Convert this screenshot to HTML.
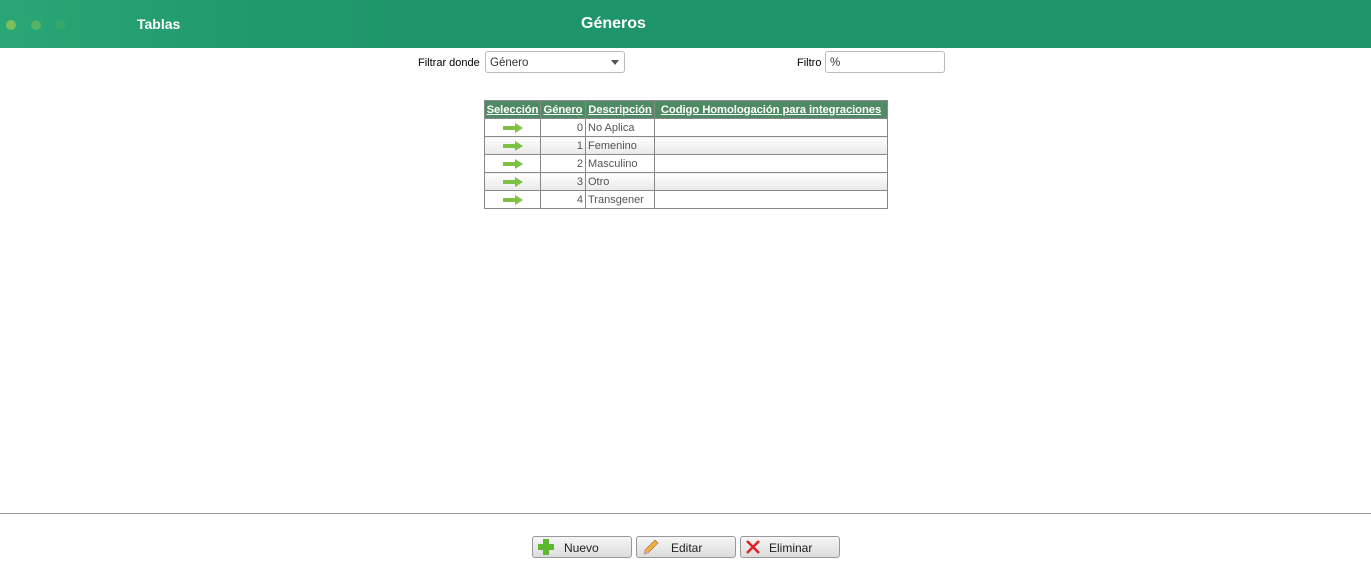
<!DOCTYPE html>
<html><head><meta charset="utf-8"><style>
*{box-sizing:border-box}
body{margin:0;width:1371px;height:584px;background:#fff;font-family:"Liberation Sans",sans-serif;font-size:12px;position:relative;overflow:hidden}
.hdr{position:absolute;left:0;top:0;width:1371px;height:48px;background:linear-gradient(90deg,#2aa776 0,#229c6c 200px,#1e9669 400px,#1e9669 100%)}
.dot{position:absolute;top:20px;width:10px;height:10px;border-radius:50%}
.t{position:absolute;color:#fff;font-weight:bold}
.lbl{position:absolute;font-size:11px;color:#000}
.box{position:absolute;border:1px solid #bbb;border-radius:3px;background:#fff;font-size:11.5px;padding:5px 4px 0;height:22px}
table{position:absolute;left:484px;top:100px;border-collapse:collapse;table-layout:fixed;width:403px;font-family:"Liberation Sans",sans-serif;font-size:11px}
td,th{border:1px solid #888;height:18px;padding:0 2px;color:#555;white-space:nowrap;overflow:hidden}
th{background:#4e8a63;color:#fff;text-decoration:underline;font-weight:bold;padding:0 1px;font-size:11.3px;letter-spacing:-0.1px}
tr.g td{background:linear-gradient(#fff,#e8e8e8)}
.arr{display:block;margin:0 auto;width:20px;height:10px}
.btn{position:absolute;top:536px;width:100px;height:22px;border:1px solid #999;border-radius:3px;background:linear-gradient(#f6f6f6,#dcdcdc);font-size:12px;color:#222}
.btn span{position:absolute;top:4px}
</style></head><body>
<div class="hdr">
<div class="dot" style="left:6px;background:#7cbf5a"></div>
<div class="dot" style="left:31px;background:#5fb661;opacity:.8"></div>
<div class="dot" style="left:56px;background:#43a865;opacity:.6"></div>
<div class="t" style="left:137px;top:16px;font-size:14px">Tablas</div>
<div class="t" style="left:581px;top:15px;font-size:16px">Géneros</div>
</div>
<div class="lbl" style="left:418px;top:57px">Filtrar donde</div>
<div class="box" style="left:485px;top:51px;width:140px;color:#333">Género<svg style="position:absolute;right:5px;top:8px" width="8" height="5"><path d="M0 0h8L4 5z" fill="#555"/></svg></div>
<div class="lbl" style="left:797px;top:57px">Filtro</div>
<div class="box" style="left:825px;top:51px;width:120px;color:#333">%</div>
<table>
<colgroup><col style="width:56px"><col style="width:45px"><col style="width:69px"><col style="width:233px"></colgroup>
<tr><th>Selección</th><th>Género</th><th>Descripción</th><th>Codigo Homologación para integraciones</th></tr>
<tr><td><svg class="arr" viewBox="0 0 20 10"><path d="M0 3h12V0l8 5-8 5V7H0z" fill="#7bc143"/></svg></td><td style="text-align:right">0</td><td>No Aplica</td><td></td></tr>
<tr class="g"><td><svg class="arr" viewBox="0 0 20 10"><path d="M0 3h12V0l8 5-8 5V7H0z" fill="#7bc143"/></svg></td><td style="text-align:right">1</td><td>Femenino</td><td></td></tr>
<tr><td><svg class="arr" viewBox="0 0 20 10"><path d="M0 3h12V0l8 5-8 5V7H0z" fill="#7bc143"/></svg></td><td style="text-align:right">2</td><td>Masculino</td><td></td></tr>
<tr class="g"><td><svg class="arr" viewBox="0 0 20 10"><path d="M0 3h12V0l8 5-8 5V7H0z" fill="#7bc143"/></svg></td><td style="text-align:right">3</td><td>Otro</td><td></td></tr>
<tr><td><svg class="arr" viewBox="0 0 20 10"><path d="M0 3h12V0l8 5-8 5V7H0z" fill="#7bc143"/></svg></td><td style="text-align:right">4</td><td>Transgener</td><td></td></tr>
</table>
<div style="position:absolute;left:0;top:513px;width:1371px;height:1px;background:#999"></div>
<div class="btn" style="left:532px"><svg style="position:absolute;left:5px;top:2px" width="16" height="16"><path d="M5 0h6v5h5v6h-5v5H5v-5H0V5h5z" fill="#5cb82e"/></svg><span style="left:31px">Nuevo</span></div>
<div class="btn" style="left:636px"><svg style="position:absolute;left:4px;top:2px" width="18" height="18"><path d="M3 15l1-4 10-10 3 3-10 10z" fill="#f0b030" stroke="#a66" stroke-width=".6"/><path d="M3 15l1-4 3 3z" fill="#caa"/></svg><span style="left:34px">Editar</span></div>
<div class="btn" style="left:740px"><svg style="position:absolute;left:5px;top:3px" width="14" height="14"><path d="M1 1l12 12M13 1L1 13" stroke="#e02020" stroke-width="2.5"/></svg><span style="left:28px">Eliminar</span></div>
</body></html>
